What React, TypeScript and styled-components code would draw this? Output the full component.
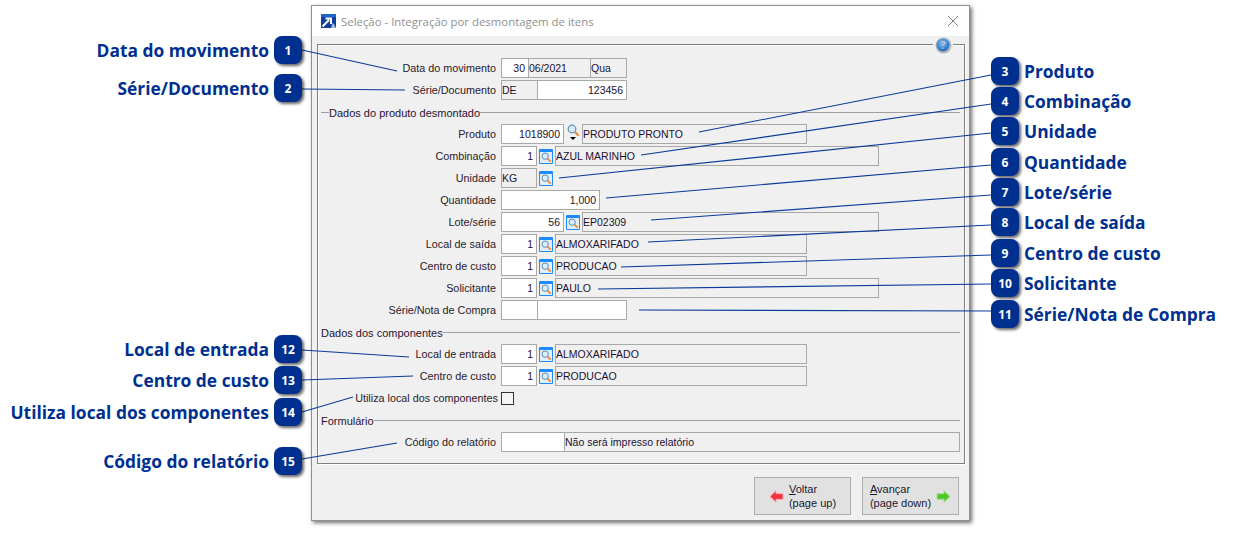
import React from "react";
import styled, { createGlobalStyle } from "styled-components";

const Global = createGlobalStyle`
  html, body { margin: 0; padding: 0; background: #fff; }
  body { width: 1234px; height: 537px; overflow: hidden; font-family: "Open Sans", "Liberation Sans", sans-serif; }
`;

const Page = styled.div`
  position: relative;
  width: 1234px;
  height: 537px;
  padding: 5px 0 0 311px;
  box-sizing: border-box;
`;

const Win = styled.div`
  width: 659px;
  height: 516px;
  box-sizing: border-box;
  background: #f0f0f0;
  border: 1px solid #8f8f8f;
  box-shadow: 2px 2px 4px rgba(0, 0, 0, 0.55);
  display: flex;
  flex-direction: column;
`;

const TitleBar = styled.div`
  height: 30px;
  background: #fff;
  display: flex;
  align-items: center;
  padding: 0 10px 0 9px;
  gap: 5px;
`;

const TitleText = styled.span`
  flex: 1;
  font: 11.4px "Open Sans", sans-serif;
  color: #8f8f8f;
`;

const Body = styled.div`
  flex: 1;
  padding: 8px 5px 0 5px;
  display: flex;
  flex-direction: column;
`;

const Group = styled.div`
  position: relative;
  width: 648px;
  height: 420px;
  box-sizing: border-box;
  border: 1px solid #7f7f7f;
  box-shadow: inset 1px 1px 0 #fff, 1px 1px 0 #fff;
  padding: 12px 0 0 0;
`;

const HelpSlot = styled.div`
  position: absolute;
  top: -9px;
  right: 11px;
  width: 20px;
  height: 18px;
  background: #f0f0f0;
  display: flex;
  align-items: center;
  justify-content: center;
`;

const Row = styled.div`
  height: 22px;
  display: flex;
  align-items: center;
`;

const Label = styled.span<{ $w?: number }>`
  width: ${(p) => p.$w ?? 178}px;
  text-align: right;
  font: 10.8px "Liberation Sans", sans-serif;
  color: #2a1a2a;
  white-space: nowrap;
  flex: none;
`;

const Fields = styled.div`
  display: flex;
  align-items: center;
  margin-left: 5px;
`;

const Field = styled.div<{ $w: number; $white?: boolean; $right?: boolean; $flush?: boolean }>`
  width: ${(p) => p.$w}px;
  height: 20px;
  box-sizing: border-box;
  margin-right: ${(p) => (p.$flush ? -1 : 0)}px;
  border: 1px solid #a8a8a8;
  background: ${(p) => (p.$white ? "#fff" : "#f0f0f0")};
  font: 10.5px/18px "Liberation Sans", sans-serif;
  color: #1c1030;
  text-align: ${(p) => (p.$right ? "right" : "left")};
  padding: 0 ${(p) => (p.$right ? 3 : 0)}px 0 0;
  white-space: nowrap;
  overflow: hidden;
  flex: none;
`;

const LookupBtn = styled.span`
  width: 14px;
  height: 15px;
  margin: 0 2px;
  flex: none;
  box-sizing: border-box;
  border: 1px solid #1a8cff;
  border-top-width: 3px;
  border-radius: 1px;
  background: #e6edf3;
  display: flex;
  align-items: center;
  justify-content: center;
`;

const PlainLookup = styled.span`
  width: 14px;
  height: 20px;
  margin: 0 2px;
  flex: none;
  display: flex;
  flex-direction: column;
  align-items: center;
  gap: 1px;
`;

const Caret = styled.span`
  width: 0;
  height: 0;
  border-left: 3px solid transparent;
  border-right: 3px solid transparent;
  border-top: 3px solid #000;
`;

const Check = styled.span`
  width: 13px;
  height: 13px;
  box-sizing: border-box;
  border: 1px solid #333;
  background: #f4f4f4;
  margin-left: 3px;
  flex: none;
`;

const Section = styled.div<{ $indent?: number }>`
  height: 22px;
  box-sizing: border-box;
  padding: 1px 4px 0 3px;
  display: flex;
  align-items: center;
  font: 11px "Liberation Sans", sans-serif;
  color: #2a1030;
  &::before {
    content: "";
    width: ${(p) => p.$indent ?? 0}px;
    height: 1px;
    background: #a0a0a0;
  }
  &::after {
    content: "";
    flex: 1;
    height: 1px;
    background: #a0a0a0;
  }
`;

const Footer = styled.div`
  flex: 1;
  display: flex;
  justify-content: flex-end;
  gap: 11px;
  padding: 13px 5px 0 0;
`;

const NavBtn = styled.div`
  width: 97px;
  height: 38px;
  box-sizing: border-box;
  background: #e1e1e1;
  border: 1px solid #adadad;
  display: flex;
  align-items: center;
  justify-content: center;
  gap: 5px;
  font: 11px/14px "Liberation Sans", sans-serif;
  color: #1a1a30;
`;

const NavText = styled.div`
  white-space: nowrap;
  u { text-decoration: underline; }
`;

const Overlay = styled.svg`
  position: absolute;
  left: 0;
  top: 0;
  pointer-events: none;
`;

const Callout = styled.div<{ $y: number; $side: "left" | "right" }>`
  position: absolute;
  top: ${(p) => p.$y - 14}px;
  ${(p) => (p.$side === "left" ? "right: 932px; flex-direction: row;" : "left: 991px; flex-direction: row-reverse;")}
  display: flex;
  align-items: center;
  gap: 5px;
`;

const CalloutText = styled.span`
  font: 700 17.4px "Open Sans", sans-serif;
  color: #00308f;
  white-space: nowrap;
`;

const Badge = styled.span`
  width: 28px;
  height: 28px;
  border-radius: 8px;
  background: #00308f;
  color: #fff;
  box-shadow: 2px 2px 3px rgba(0, 0, 0, 0.6);
  display: flex;
  align-items: center;
  justify-content: center;
  font: 700 12px "Open Sans", sans-serif;
`;

const Glass = ({ size = 12 }: { size?: number }) => (
  <svg width={size} height={size} viewBox="0 0 12 12">
    <line x1="7.2" y1="7.2" x2="11" y2="11" stroke="#ee8a3c" strokeWidth="2.2" strokeLinecap="round" />
    <circle cx="5" cy="5" r="3.8" fill="#d8ecfa" stroke="#5f8fb3" strokeWidth="1.2" />
  </svg>
);

const Lookup = () => (
  <LookupBtn>
    <Glass size={10} />
  </LookupBtn>
);

const Arrow = ({ dir }: { dir: "l" | "r" }) =>
  dir === "l" ? (
    <svg width="15" height="13" viewBox="0 0 15 13">
      <path d="M1 6.5 7 .7v3h7v5.6H7v3z" fill="#f2323f" stroke="#f5a8a8" strokeWidth="1" />
    </svg>
  ) : (
    <svg width="15" height="13" viewBox="0 0 15 13">
      <path d="M14 6.5 8 .7v3H1v5.6h7v3z" fill="#4fc92a" stroke="#a5dd90" strokeWidth="1" />
    </svg>
  );

const left = [
  { n: 1, t: "Data do movimento", y: 50 },
  { n: 2, t: "Série/Documento", y: 88 },
  { n: 12, t: "Local de entrada", y: 349 },
  { n: 13, t: "Centro de custo", y: 380 },
  { n: 14, t: "Utiliza local dos componentes", y: 412 },
  { n: 15, t: "Código do relatório", y: 461 },
];
const right = [
  { n: 3, t: "Produto", y: 71 },
  { n: 4, t: "Combinação", y: 101 },
  { n: 5, t: "Unidade", y: 131 },
  { n: 6, t: "Quantidade", y: 162 },
  { n: 7, t: "Lote/série", y: 192 },
  { n: 8, t: "Local de saída", y: 222 },
  { n: 9, t: "Centro de custo", y: 253 },
  { n: 10, t: "Solicitante", y: 283 },
  { n: 11, t: "Série/Nota de Compra", y: 314 },
];
const lines = [
  [302, 50, 397, 71],
  [302, 89, 405, 90],
  [991, 75, 699, 132],
  [991, 104, 641, 155],
  [991, 133, 559, 178],
  [991, 165, 606, 198],
  [991, 195, 651, 220],
  [991, 225, 648, 242],
  [991, 255, 621, 267],
  [991, 284, 598, 289],
  [991, 311, 639, 310],
  [302, 350, 409, 357],
  [302, 380, 413, 376],
  [302, 412, 353, 397],
  [302, 459, 397, 443],
];

export default function App() {
  return (
    <Page>
      <Global />
      <Win>
        <TitleBar>
          <svg width="15" height="14" viewBox="0 0 15 14">
            <rect width="15" height="14" fill="#0f3f96" />
            <rect width="15" height="3" fill="#1f66cc" />
            <path d="M1.5 12.5 8 6M4.5 4.5H10V10" stroke="#fff" strokeWidth="2" fill="none" />
            <path d="M10 14l1.5-5 1.5 1 2 4z" fill="#9db8d8" />
          </svg>
          <TitleText>Seleção - Integração por desmontagem de itens</TitleText>
          <svg width="12" height="12" viewBox="0 0 12 12">
            <path d="M1 1l10 10M11 1 1 11" stroke="#7a7a7a" strokeWidth="1" />
          </svg>
        </TitleBar>
        <Body>
          <Group>
            <HelpSlot>
              <svg width="17" height="17" viewBox="0 0 17 17">
                <defs>
                  <radialGradient id="hg" cx="45%" cy="35%" r="70%">
                    <stop offset="0" stopColor="#8cc4f4" />
                    <stop offset="0.7" stopColor="#2f7fd0" />
                    <stop offset="1" stopColor="#2a5f9c" />
                  </radialGradient>
                </defs>
                <circle cx="8.5" cy="8.5" r="8" fill="#b4b8bc" />
                <circle cx="8" cy="8" r="6.4" fill="url(#hg)" />
                <text x="8" y="11.5" textAnchor="middle" fontSize="10" fontWeight="700" fontFamily="Open Sans" fill="#fff" stroke="#1a4f8f" strokeWidth="0.3">?</text>
              </svg>
            </HelpSlot>
            <Row>
              <Label>Data do movimento</Label>
              <Fields>
                <Field $w={28} $white $right $flush>30</Field>
                <Field $w={63} $flush>06/2021</Field>
                <Field $w={37}>Qua</Field>
              </Fields>
            </Row>
            <Row>
              <Label>Série/Documento</Label>
              <Fields>
                <Field $w={37} $flush>DE</Field>
                <Field $w={90} $white $right>123456</Field>
              </Fields>
            </Row>
            <Section $indent={8}>Dados do produto desmontado</Section>
            <Row>
              <Label>Produto</Label>
              <Fields>
                <Field $w={63} $white $right>1018900</Field>
                <PlainLookup>
                  <Glass />
                  <Caret />
                </PlainLookup>
                <Field $w={225}>PRODUTO PRONTO</Field>
              </Fields>
            </Row>
            <Row>
              <Label>Combinação</Label>
              <Fields>
                <Field $w={36} $white $right>1</Field>
                <Lookup />
                <Field $w={324}>AZUL MARINHO</Field>
              </Fields>
            </Row>
            <Row>
              <Label>Unidade</Label>
              <Fields>
                <Field $w={36}>KG</Field>
                <Lookup />
              </Fields>
            </Row>
            <Row>
              <Label>Quantidade</Label>
              <Fields>
                <Field $w={99} $white $right>1,000</Field>
              </Fields>
            </Row>
            <Row>
              <Label>Lote/série</Label>
              <Fields>
                <Field $w={63} $white $right>56</Field>
                <Lookup />
                <Field $w={297}>EP02309</Field>
              </Fields>
            </Row>
            <Row>
              <Label>Local de saída</Label>
              <Fields>
                <Field $w={36} $white $right>1</Field>
                <Lookup />
                <Field $w={252}>ALMOXARIFADO</Field>
              </Fields>
            </Row>
            <Row>
              <Label>Centro de custo</Label>
              <Fields>
                <Field $w={36} $white $right>1</Field>
                <Lookup />
                <Field $w={252}>PRODUCAO</Field>
              </Fields>
            </Row>
            <Row>
              <Label>Solicitante</Label>
              <Fields>
                <Field $w={36} $white $right>1</Field>
                <Lookup />
                <Field $w={324}>PAULO</Field>
              </Fields>
            </Row>
            <Row>
              <Label>Série/Nota de Compra</Label>
              <Fields>
                <Field $w={37} $white $flush />
                <Field $w={90} $white />
              </Fields>
            </Row>
            <Section>Dados dos componentes</Section>
            <Row>
              <Label>Local de entrada</Label>
              <Fields>
                <Field $w={36} $white $right>1</Field>
                <Lookup />
                <Field $w={252}>ALMOXARIFADO</Field>
              </Fields>
            </Row>
            <Row>
              <Label>Centro de custo</Label>
              <Fields>
                <Field $w={36} $white $right>1</Field>
                <Lookup />
                <Field $w={252}>PRODUCAO</Field>
              </Fields>
            </Row>
            <Row>
              <Label $w={180}>Utiliza local dos componentes</Label>
              <Check />
            </Row>
            <Section>Formulário</Section>
            <Row>
              <Label>Código do relatório</Label>
              <Fields>
                <Field $w={64} $white $flush />
                <Field $w={396}>Não será impresso relatório</Field>
              </Fields>
            </Row>
          </Group>
          <Footer>
            <NavBtn>
              <Arrow dir="l" />
              <NavText>
                <u>V</u>oltar
                <br />
                (page up)
              </NavText>
            </NavBtn>
            <NavBtn>
              <NavText>
                <u>A</u>vançar
                <br />
                (page down)
              </NavText>
              <Arrow dir="r" />
            </NavBtn>
          </Footer>
        </Body>
      </Win>
      <Overlay width="1234" height="537" viewBox="0 0 1234 537">
        {lines.map((l, i) => (
          <line key={i} x1={l[0]} y1={l[1]} x2={l[2]} y2={l[3]} stroke="#0a3a9a" strokeWidth="1.1" />
        ))}
      </Overlay>
      {left.map((c) => (
        <Callout key={c.n} $y={c.y} $side="left">
          <CalloutText>{c.t}</CalloutText>
          <Badge>{c.n}</Badge>
        </Callout>
      ))}
      {right.map((c) => (
        <Callout key={c.n} $y={c.y} $side="right">
          <CalloutText>{c.t}</CalloutText>
          <Badge>{c.n}</Badge>
        </Callout>
      ))}
    </Page>
  );
}
